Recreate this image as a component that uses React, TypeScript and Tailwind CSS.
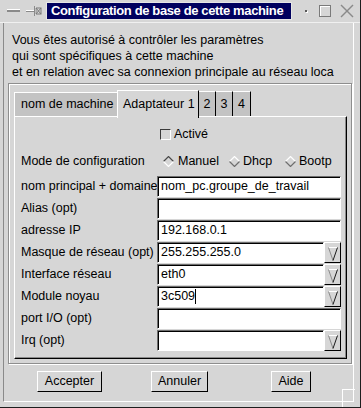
import React from "react";

function Diamond({ selected }: { selected?: boolean }) {
  const top = selected ? "#4a4a4a" : "#ffffff";
  const bot = selected ? "#ffffff" : "#6e6e6e";
  return (
    <svg width="11" height="11" viewBox="0 0 11 11" className="shrink-0">
      <polygon points="5.5,0.5 10.5,5.5 5.5,10.5 0.5,5.5" fill={selected ? "#d6d6d6" : "#d6d6d6"} />
      <polyline points="0.5,5.5 5.5,0.5 10.5,5.5" fill="none" stroke={top} strokeWidth="1.2" />
      <polyline points="0.5,5.5 5.5,10.5 10.5,5.5" fill="none" stroke={bot} strokeWidth="1.2" />
    </svg>
  );
}

function DropBtn() {
  return (
    <div className="w-[17px] h-[21px] bg-[#d6d6d6] border-t border-l border-t-white border-l-white border-r border-b border-r-black border-b-black flex items-start justify-center">
      <svg width="12" height="16" viewBox="0 0 12 16" className="mt-[3px]">
        <line x1="1.5" y1="1.5" x2="10.5" y2="1.5" stroke="#ffffff" strokeWidth="1" />
        <line x1="1.5" y1="1.5" x2="6" y2="14.5" stroke="#8a8a8a" strokeWidth="1" />
        <line x1="10.5" y1="1.5" x2="6" y2="14.5" stroke="#1a1a1a" strokeWidth="1" />
      </svg>
    </div>
  );
}

function Field({ value, dropdown, cursor }: { value?: string; dropdown?: boolean; cursor?: boolean }) {
  return (
    <div className="flex h-[21px]">
      <div
        className={
          (dropdown ? "w-[167px] " : "w-[184px] ") +
          "h-[21px] bg-white border-t border-l border-t-[#6e6e6e] border-l-[#6e6e6e] border-r border-b border-r-white border-b-white shadow-[inset_1px_1px_0_#000] flex items-center pl-[3px] text-[12.5px] text-black whitespace-nowrap overflow-hidden"
        }
      >
        <span>{value}</span>
        {cursor && <span className="inline-block w-px h-[15px] bg-black" />}
      </div>
      {dropdown && <DropBtn />}
    </div>
  );
}

function Row({ label, value, dropdown, cursor }: { label: string; value?: string; dropdown?: boolean; cursor?: boolean }) {
  return (
    <div className="flex h-[22px] items-start">
      <div className="w-[136px] h-[21px] flex items-center whitespace-nowrap text-[12.5px] text-black">{label}</div>
      <Field value={value} dropdown={dropdown} cursor={cursor} />
    </div>
  );
}

export default function App() {
  return (
    <div className="w-[361px] h-[408px] bg-[#d6d6d6] flex flex-col border-r border-b border-r-[#1e1e1e] border-b-[#1e1e1e] font-['Liberation_Sans',Arial,sans-serif] text-black overflow-hidden relative">
      {/* Title bar */}
      <div className="h-[23px] flex items-center border-b border-b-[#f0f0f0] shrink-0">
        <svg width="14" height="4" viewBox="0 0 14 4" className="ml-[7px]">
          <rect x="0" y="0" width="13" height="1" fill="#ffffff" />
          <rect x="0" y="1" width="13" height="2" fill="#8a8a8a" />
        </svg>
        <svg width="16" height="14" viewBox="0 0 16 14" className="ml-[5px]">
          <rect x="0" y="6" width="8" height="1" fill="#ffffff" />
          <rect x="0" y="7" width="8" height="1" fill="#8a8a8a" />
          <rect x="8" y="2" width="1" height="10" fill="#8a8a8a" />
          <rect x="9" y="3" width="1" height="8" fill="#ffffff" />
          <rect x="10" y="4" width="5" height="6" fill="none" stroke="#7a7a7a" strokeWidth="1" />
          <line x1="10" y1="4" x2="15" y2="10" stroke="#7a7a7a" strokeWidth="1" />
          <line x1="15" y1="4" x2="10" y2="10" stroke="#7a7a7a" strokeWidth="1" />
        </svg>
        <div className="ml-[4px] w-[246px] h-[18px] bg-[#00005e] border border-[#e6e6e6] flex items-center pl-[4px] text-white font-bold text-[13px] tracking-[-0.37px] whitespace-nowrap overflow-hidden">
          Configuration de base de cette machine
        </div>
        <div className="ml-[13px] w-[2px] h-[2px] bg-[#5a5a5a] shadow-[1px_1px_0_#fff]" />
        <div className="ml-[12px] w-[12px] h-[12px] border border-[#7a7a7a] shadow-[inset_1px_1px_0_#fff]" />
        <svg width="14" height="14" viewBox="0 0 14 14" className="ml-[9px]">
          <line x1="1" y1="1" x2="13" y2="13" stroke="#8a8a8a" strokeWidth="1.4" />
          <line x1="13" y1="1" x2="1" y2="13" stroke="#8a8a8a" strokeWidth="1.4" />
        </svg>
      </div>

      {/* Body */}
      <div className="flex-1 ml-[3px] mr-[6px] mb-[5px] border-l border-l-[#8a8a8a] border-r border-r-white border-b border-b-white flex flex-col">
        <div className="pl-[8px] pt-[9px] text-[12.5px] leading-[16px] whitespace-nowrap">
          <div>Vous êtes autorisé à contrôler les paramètres</div>
          <div>qui sont spécifiques à cette machine</div>
          <div>et en relation avec sa connexion principale au réseau loca</div>
        </div>

        {/* Etched frame */}
        <div className="ml-[4px] mt-[3px] w-[344px] border border-[#8e8e8e] shadow-[inset_1px_1px_0_#fff,1px_1px_0_#fff] pl-[5px] pr-[4px] pt-[6px] pb-[4px]">
          {/* Tabs */}
          <div className="flex items-end h-[26px] text-[12.5px]">
            <div className="w-[103px] h-[24px] bg-[#c3c3c3] border-t border-l border-white flex items-center pl-[6px] whitespace-nowrap">
              nom de machine
            </div>
            <div className="relative z-10 w-[82px] h-[28px] mb-[-2px] bg-[#d6d6d6] border-t border-l border-white border-r border-r-black flex items-start pt-[4px] pl-[5px] whitespace-nowrap">
              Adaptateur 1
            </div>
            <div className="w-[17px] h-[25px] bg-[#c3c3c3] border-t border-t-white border-r border-r-black flex items-center justify-center">2</div>
            <div className="w-[17px] h-[25px] bg-[#c3c3c3] border-t border-t-white border-r border-r-black flex items-center justify-center">3</div>
            <div className="w-[18px] h-[25px] bg-[#c3c3c3] border-t border-t-white border-r border-r-black flex items-center justify-center">4</div>
          </div>

          {/* Page */}
          <div className="border-t border-l border-white border-r border-b border-r-black border-b-black shadow-[inset_-1px_-1px_0_#8a8a8a] pl-[6px] pb-[6px]">
            <div className="mt-[7px] h-[20px] flex items-center pl-[139px] text-[12.5px]">
              <div className="w-[11px] h-[11px] border-t border-l border-t-[#3a3a3a] border-l-[#3a3a3a] border-r border-b border-r-white border-b-white" />
              <span className="ml-[3px]">Activé</span>
            </div>
            <div className="mt-[7px] h-[20px] flex items-center text-[12.5px] whitespace-nowrap">
              <div className="w-[142px]">Mode de configuration</div>
              <div className="w-[66px] flex items-center">
                <Diamond selected />
                <span className="ml-[4px]">Manuel</span>
              </div>
              <div className="w-[56px] flex items-center">
                <Diamond />
                <span className="ml-[3px]">Dhcp</span>
              </div>
              <div className="flex items-center">
                <Diamond />
                <span className="ml-[3px]">Bootp</span>
              </div>
            </div>
            <div className="mt-[5px]">
              <Row label="nom principal + domaine" value="nom_pc.groupe_de_travail" />
              <Row label="Alias (opt)" />
              <Row label="adresse IP" value="192.168.0.1" />
              <Row label="Masque de réseau (opt)" value="255.255.255.0" dropdown />
              <Row label="Interface réseau" value="eth0" dropdown />
              <Row label="Module noyau" value="3c509" dropdown cursor />
              <Row label="port I/O (opt)" />
              <Row label="Irq (opt)" dropdown />
            </div>
          </div>
        </div>

        {/* Buttons */}
        <div className="mt-[7px] flex text-[12.5px]">
          <div className="ml-[33px] w-[65px] h-[21px] border-t border-l border-white border-r border-b border-r-black border-b-black flex items-center justify-center">Accepter</div>
          <div className="ml-[49px] w-[57px] h-[21px] border-t border-l border-white border-r border-b border-r-black border-b-black flex items-center justify-center">Annuler</div>
          <div className="ml-[63px] w-[40px] h-[21px] border-t border-l border-white border-r border-b border-r-black border-b-black flex items-center justify-center">Aide</div>
        </div>
      </div>

      {/* resize corner mark */}
      <div className="absolute left-[342px] top-[389px] w-[13px] h-[19px] border-l border-t border-l-white border-t-white" />
    </div>
  );
}
